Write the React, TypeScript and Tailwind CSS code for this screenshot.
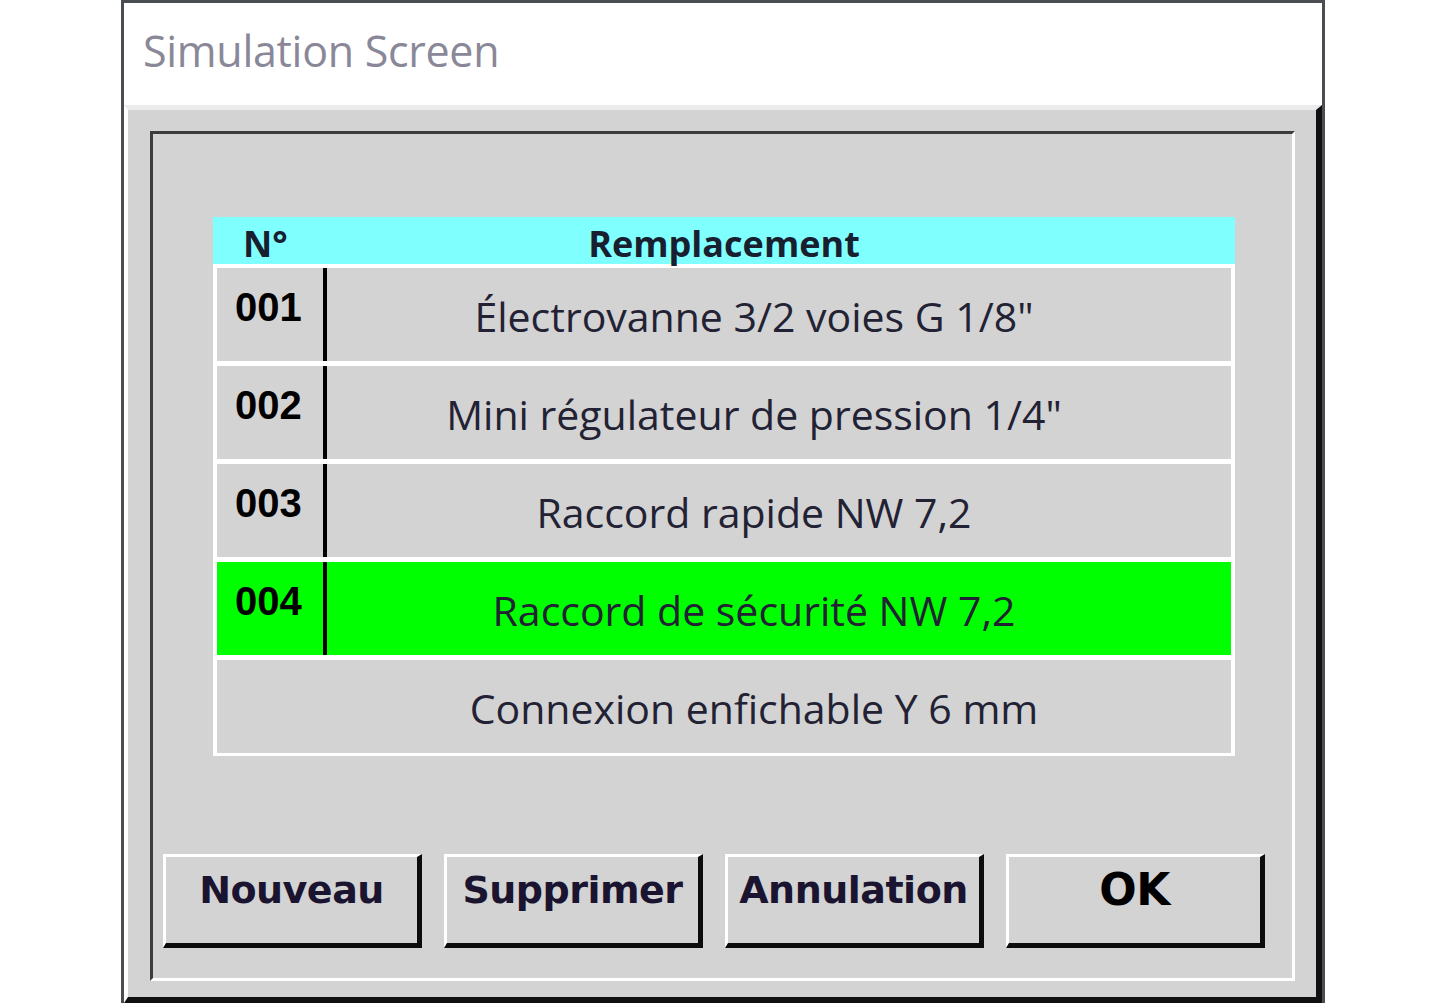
import React from 'react';

const rows = [
  { num: '001', label: 'Électrovanne 3/2 voies G 1/8"' },
  { num: '002', label: 'Mini régulateur de pression 1/4"' },
  { num: '003', label: 'Raccord rapide NW 7,2' },
  { num: '004', label: 'Raccord de sécurité NW 7,2', active: true },
  { num: '', label: 'Connexion enfichable Y 6 mm' },
];

const buttons = ['Nouveau', 'Supprimer', 'Annulation', 'OK'];

const ui = "font-['Open_Sans','Noto_Sans',sans-serif]";

export default function App() {
  return (
    <div className="w-[1440px] h-[1008px] bg-white pl-[121px] overflow-hidden">
      <div className="w-[1204px] h-[1003px] border-t-[3px] border-x-[3px] border-[#4a4e52] flex flex-col">
        {/* Title bar */}
        <div className="h-[102px] bg-white flex items-center pl-[19px] pb-[6px]">
          <span className={`${ui} text-[43px] text-[#8a8898] tracking-[-0.3px]`}>Simulation Screen</span>
        </div>

        {/* Raised panel */}
        <div className="flex-1 bg-[#d3d3d3] border-t-[5px] border-t-[#ebebeb] border-l-[4px] border-l-white border-r-[6px] border-r-[#101010] border-b-[6px] border-b-[#101010] pt-[21px] pl-[22px] pr-[21px] pb-[16px]">
          {/* Sunken frame */}
          <div className="h-full border-t-[3px] border-l-[3px] border-t-[#3c3c3c] border-l-[#3c3c3c] border-b-[3px] border-r-[3px] border-b-white border-r-white flex flex-col">
            {/* Table */}
            <div className="ml-[60px] mt-[83px] w-[1022px] bg-white">
              <div className={`${ui} h-[47px] bg-[#80ffff] grid grid-cols-[1fr_auto_1fr] items-center font-bold text-[#182030] text-[36px]`}>
                <span className="pl-[30px]">N°</span>
                <span>Remplacement</span>
                <span />
              </div>
              <div className="flex flex-col gap-[5px] px-[4px] pt-[4px] pb-[3px]">
                {rows.map((r) => (
                  <div
                    key={r.label}
                    className={`h-[93px] flex ${r.active ? 'bg-[#00ff00]' : 'bg-[#d3d3d3]'}`}
                  >
                    <div className="w-[106px] shrink-0 pl-[18px] pt-[19px] font-['Liberation_Sans',Arial,sans-serif] font-bold text-[40px] leading-none text-black">
                      {r.num}
                    </div>
                    {r.num ? <div className="w-[4px] bg-black shrink-0" /> : <div className="w-[4px] shrink-0" />}
                    <div className={`${ui} flex-1 flex items-center justify-center pr-[50px] pt-[4px] text-[41px] text-[#222234]`}>
                      {r.label}
                    </div>
                  </div>
                ))}
              </div>
            </div>

            {/* Buttons */}
            <div className="mt-auto mb-[30px] ml-[10px] flex gap-[22px]">
              {buttons.map((b) => (
                <button
                  key={b}
                  className="w-[259px] h-[94px] bg-[#d3d3d3] border-t-[3px] border-l-[3px] border-t-white border-l-white border-b-[5px] border-r-[5px] border-b-[#0c0c0c] border-r-[#0c0c0c] flex items-center justify-center pb-[24px] pt-[4px]"
                >
                  <span
                    className={`font-['DejaVu_Sans',Verdana,sans-serif] font-bold tracking-[-0.5px] ${
                      b === 'OK' ? 'text-black text-[44px]' : 'text-[#1a1430] text-[38px]'
                    }`}
                  >
                    {b}
                  </span>
                </button>
              ))}
            </div>
          </div>
        </div>
      </div>
    </div>
  );
}
